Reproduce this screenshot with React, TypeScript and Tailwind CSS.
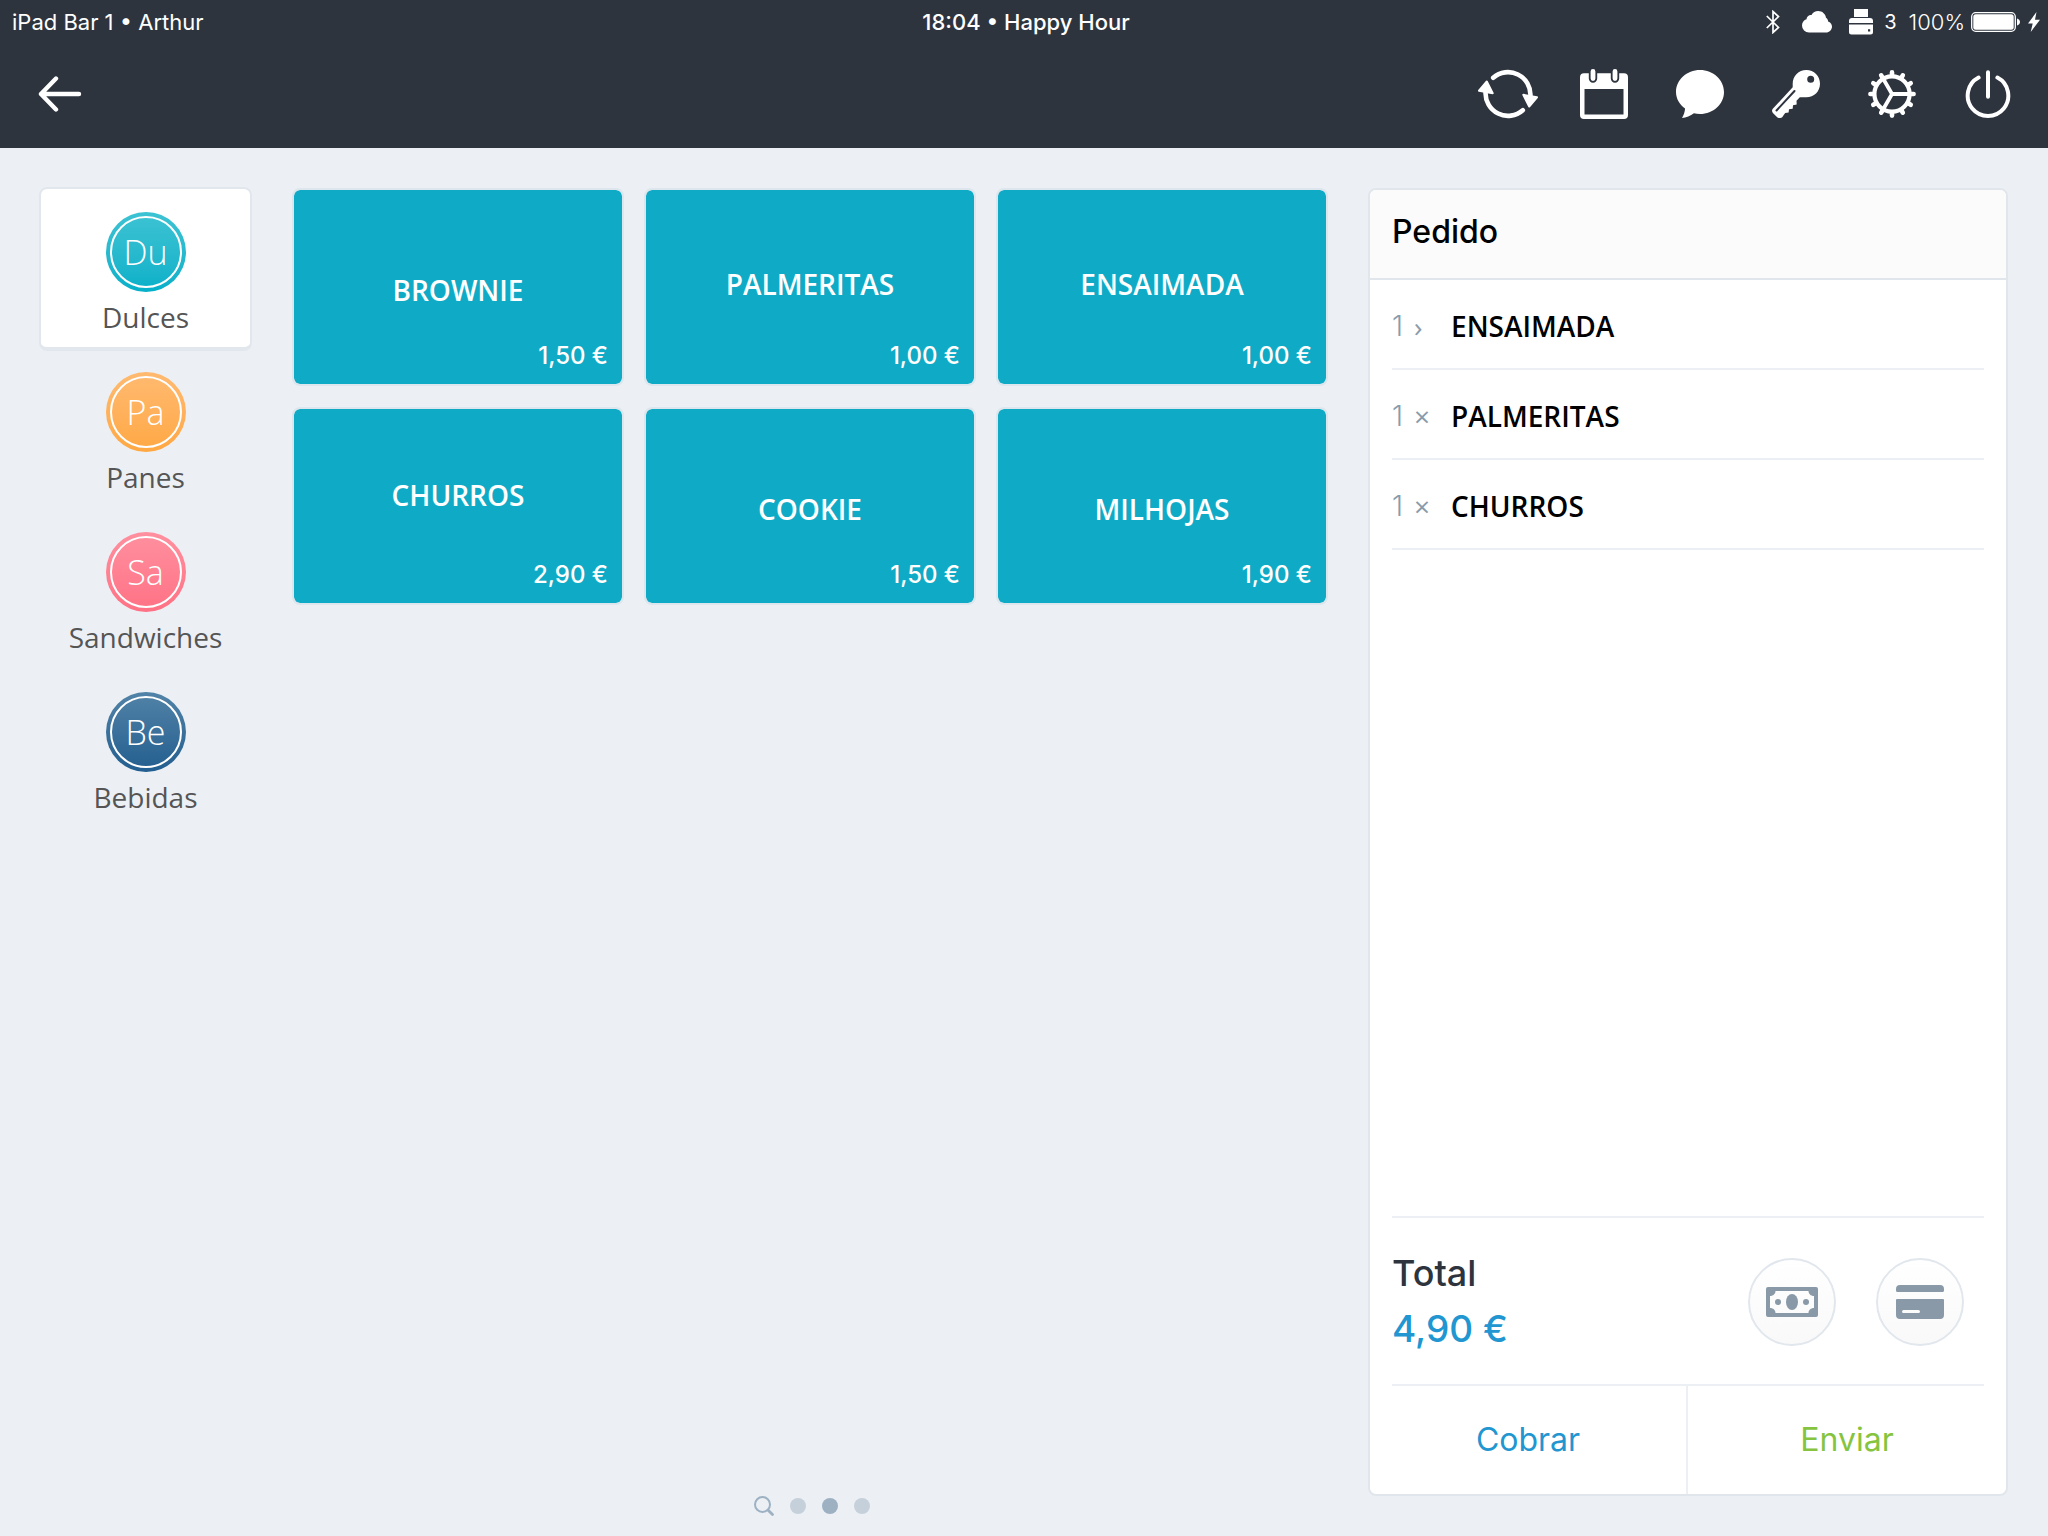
import React, { useState } from 'react';

const categories = [
  { initials: 'Du', name: 'Dulces', gradient: 'from-[#3cc3d3] to-[#04b0c9]' },
  { initials: 'Pa', name: 'Panes', gradient: 'from-[#ffba70] to-[#ffa843]' },
  { initials: 'Sa', name: 'Sandwiches', gradient: 'from-[#ff909f] to-[#ff7185]' },
  { initials: 'Be', name: 'Bebidas', gradient: 'from-[#5283a7] to-[#215e8f]' },
];

const products = [
  { name: 'BROWNIE', price: '1,50 €', label: 'low' },
  { name: 'PALMERITAS', price: '1,00 €', label: 'middle' },
  { name: 'ENSAIMADA', price: '1,00 €', label: 'middle' },
  { name: 'CHURROS', price: '2,90 €', label: 'high' },
  { name: 'COOKIE', price: '1,50 €', label: 'low' },
  { name: 'MILHOJAS', price: '1,90 €', label: 'low' },
];

const labelPadding = {
  high: 'pt-[66px]',
  middle: 'pt-[74px]',
  low: 'pt-[80px]',
};

const orderLines = [
  { qty: 1, mark: '›', name: 'ENSAIMADA' },
  { qty: 1, mark: '×', name: 'PALMERITAS' },
  { qty: 1, mark: '×', name: 'CHURROS' },
];

const BackIcon = () => (
  <svg width="44" height="36" viewBox="0 0 44 36" fill="none" stroke="white" strokeWidth="4.4" strokeLinecap="round" strokeLinejoin="round">
    <path d="M41 18H3M18 2.5 3 18l15 15.5" />
  </svg>
);

const SyncIcon = () => (
  <svg width="60" height="50" viewBox="0 0 60 50">
    <path d="M15.2 8.8A22.4 22.4 0 0 1 52.4 27" fill="none" stroke="white" strokeWidth="4.6" strokeLinecap="round" />
    <path d="M45.3 25.8 59 28.3 51.2 37.5Z" fill="white" stroke="white" strokeWidth="2" strokeLinejoin="round" />
    <path d="M44.8 41.2A22.4 22.4 0 0 1 7.6 23" fill="none" stroke="white" strokeWidth="4.6" strokeLinecap="round" />
    <path d="M14.7 24.2 1 21.7 8.8 12.5Z" fill="white" stroke="white" strokeWidth="2" strokeLinejoin="round" />
  </svg>
);

const CalendarIcon = () => (
  <svg width="48" height="50" viewBox="0 0 48 50">
    <path fill="white" fillRule="evenodd" d="M4 4.3h40a4 4 0 0 1 4 4V46a4 4 0 0 1-4 4H4a4 4 0 0 1-4-4V8.3a4 4 0 0 1 4-4ZM4.5 20v25.5h39V20Z" />
    <path d="M13 2.5v7M35 2.5v7" stroke="#2d343e" strokeWidth="8.4" strokeLinecap="round" />
    <path d="M13 2.4v7.2M35 2.4v7.2" stroke="white" strokeWidth="4.8" strokeLinecap="round" />
  </svg>
);

const ChatIcon = () => (
  <svg width="48" height="48" viewBox="0 0 48 48" fill="white">
    <path d="M24 0c13.3 0 24 9.800 24 22s-10.700 22-24 22c-2.100 0-4.200-.2-6.100-.7C14.500 46 10.300 47.700 6 48c1.700-2.700 2.800-6 3.100-9.400C3.500 34.600 0 28.700 0 22 0 9.800 10.700 0 24 0Z" />
  </svg>
);

const KeyIcon = () => (
  <svg width="48" height="48" viewBox="0 0 48 48">
    <path
      fill="white"
      fillRule="evenodd"
      d="M34.3 0C42 0 48 6 48 13.700S42 27.300 34.300 27.300h-6.500l-3.300 3.500.2 3.700-3.700.7-.3 3.500-3.700.6-.4 3.300-3.400.4-1.300 1.800-1.700 2.400c-1 1-3.900 1.200-5 .1L.9 42.900C-.2 41.700-.3 40 .8 38.800L20.700 17.300V13.700C20.700 6 26.700 0 34.300 0Zm4.400 5.700a3.500 3.500 0 1 0 0 7 3.500 3.500 0 0 0 0-7Z"
    />
    <path d="M4.5 40.5 22.5 21" stroke="#2d343e" strokeWidth="2" strokeLinecap="round" />
  </svg>
);

const GearIcon = () => (
  <svg width="48" height="48" viewBox="0 0 48 48" fill="none" stroke="white">
    <circle cx="24" cy="24" r="17.6" strokeWidth="4.2" />
    <g strokeWidth="4.6" strokeLinecap="round">
      {[0, 30, 60, 90, 120, 150, 180, 210, 240, 270, 300, 330].map((angle) => (
        <path key={angle} d="M24 4.8V2.4" transform={`rotate(${angle} 24 24)`} />
      ))}
    </g>
    <path d="M24 24h17M24 24 15.5 9.3M24 24l-8.5 14.7" strokeWidth="3.8" />
  </svg>
);

const PowerIcon = () => (
  <svg width="46" height="48" viewBox="0 0 46 48" fill="none" stroke="white" strokeWidth="4" strokeLinecap="round">
    <path d="M23 2.2v24.6M13.6 7.6a20.3 20.3 0 1 0 18.8 0" />
  </svg>
);

const StatusIcons = () => (
  <div className="flex flex-1 items-center justify-end pr-2">
    <svg className="mr-[22px]" width="14" height="24" viewBox="0 0 14 24" fill="none" stroke="white" strokeWidth="1.7">
      <path d="M.8 6 12.5 17.5 7 22.5v-21L12.5 6.5.8 18" />
    </svg>
    <svg className="mr-[17px]" width="30" height="22" viewBox="0 0 30 22" fill="white">
      <path d="M7 21.5a7 7 0 0 1-7-7C0 11.3 2 9 4.5 8.2 4.7 5.5 7 3.7 9.5 4 10.8 1.6 13.3 0 16.2 0c4 0 7.3 2.9 7.8 6.7 1.5.8 2.1 2.3 2.1 3.7 2.4.8 3.9 2.7 3.9 5.1 0 3.4-2.7 6-6 6Z" />
    </svg>
    <svg className="mr-[11px]" width="24" height="26" viewBox="0 0 24 26" fill="white">
      <path d="M5 0h14v8H5Z" />
      <path d="M3 9h18a3 3 0 0 1 3 3v2H0v-2a3 3 0 0 1 3-3Z" />
      <path fillRule="evenodd" d="M0 15.5h24V23a2.500 2.500 0 0 1-2.500 2.500h-19A2.500 2.500 0 0 1 0 23Zm19 4.700v2.200h2.200v-2.200Z" />
    </svg>
    <span className="mr-3 text-xl">3</span>
    <span className="mr-[6px] text-[22px] font-light">100%</span>
    <svg className="mr-[7px]" width="50" height="20" viewBox="0 0 50 20" fill="white">
      <rect x=".7" y=".7" width="43.6" height="18.6" rx="4" fill="none" stroke="white" strokeWidth="1.3" />
      <rect x="2.3" y="2.3" width="40.4" height="15.4" rx="2.5" />
      <path d="M46 6.5c1.6.4 3 1.8 3 3.5s-1.4 3.1-3 3.5Z" />
    </svg>
    <svg width="12" height="20" viewBox="0 0 12 20" fill="white">
      <path d="M8.5 0 0 11.500h4.700L2.700 20 12 7.800H7Z" />
    </svg>
  </div>
);

const CashIcon = () => (
  <svg width="52" height="30" viewBox="0 0 52 30" fill="#8999a8">
    <path fillRule="evenodd" d="M2 0h48a2 2 0 0 1 2 2v26a2 2 0 0 1-2 2H2a2 2 0 0 1-2-2V2a2 2 0 0 1 2-2Zm7.500 4c0 2.800-2.200 5-5.500 5v12c3.300 0 5.500 2.200 5.500 5h33c0-2.800 2.200-5 5.500-5V9c-3.300 0-5.500-2.200-5.500-5Z" />
    <ellipse cx="26" cy="15" rx="6" ry="8" />
    <circle cx="12" cy="15" r="3" />
    <circle cx="40" cy="15" r="3" />
  </svg>
);

const CardIcon = () => (
  <svg width="48" height="34" viewBox="0 0 48 34" fill="#8999a8">
    <path d="M4 0h40a4 4 0 0 1 4 4v1.500A1.500 1.500 0 0 1 46.500 7h-45A1.500 1.500 0 0 1 0 5.500V4a4 4 0 0 1 4-4Z" />
    <path fillRule="evenodd" d="M1 14h46a1 1 0 0 1 1 1v15a4 4 0 0 1-4 4H4a4 4 0 0 1-4-4V15a1 1 0 0 1 1-1Zm6.500 11a1.500 1.500 0 0 0 0 3h15a1.500 1.500 0 0 0 0-3Z" />
  </svg>
);

const toolbar = [
  { label: 'Sincronizar', Icon: SyncIcon },
  { label: 'Calendario', Icon: CalendarIcon },
  { label: 'Mensajes', Icon: ChatIcon },
  { label: 'Llave', Icon: KeyIcon },
  { label: 'Ajustes', Icon: GearIcon },
  { label: 'Apagar', Icon: PowerIcon },
];

const Header = () => (
  <header className="bg-[#2d343e] text-white">
    <div className="flex h-11 items-center text-[22px] leading-7">
      <div className="flex-1 pl-3">iPad Bar 1 • Arthur</div>
      <div className="font-medium">18:04 • Happy Hour</div>
      <StatusIcons />
    </div>
    <div className="flex h-[104px] items-start justify-between pr-[30px] pl-[38px]">
      <button aria-label="Volver" className="mt-8">
        <BackIcon />
      </button>
      <nav className="mt-[25px] flex gap-9">
        {toolbar.map(({ label, Icon }) => (
          <button key={label} aria-label={label} className="flex h-[50px] w-[60px] items-center justify-center">
            <Icon />
          </button>
        ))}
      </nav>
    </div>
  </header>
);

const Sidebar = ({ active, onSelect }) => (
  <aside className="-mt-px flex w-[213px] shrink-0 flex-col">
    {categories.map(({ initials, name, gradient }) => (
      <button
        key={name}
        onClick={() => onSelect(name)}
        className={`flex h-[164px] flex-col items-center rounded-lg border-2 border-b-4 pt-[23px] not-last:-mb-1 ${
          active === name ? 'border-[#e2e7ee] bg-white' : 'border-transparent'
        }`}
      >
        <span className={`flex h-20 w-20 shrink-0 rounded-full bg-linear-to-b p-1 ${gradient}`}>
          <span className="flex flex-1 items-center justify-center rounded-full border-2 border-white text-[34px] leading-10 font-light text-white font-['Open_Sans',sans-serif]">
            {initials}
          </span>
        </span>
        <span className="mt-[7px] text-[28px] leading-9 text-[#555] font-['Open_Sans',sans-serif]">{name}</span>
      </button>
    ))}
  </aside>
);

const ProductTile = ({ name, price, label }) => (
  <button
    className={`flex h-[198px] flex-col rounded-lg border-2 border-[#dde6ed] bg-[#0fabc6] bg-clip-padding pr-[14px] pb-3 pl-[14px] text-white ${labelPadding[label]}`}
  >
    <span className="self-center text-[28px] leading-10 font-semibold font-['Open_Sans',sans-serif]">{name}</span>
    <span className="mt-auto self-end text-2xl font-medium">{price}</span>
  </button>
);

const Pager = () => (
  <div className="mt-auto flex items-center justify-center gap-4 pl-1">
    <button aria-label="Buscar">
      <svg width="20" height="20" viewBox="0 0 20 20" fill="none" stroke="#9db1c3" strokeLinecap="round">
        <circle cx="8.5" cy="8.5" r="7.5" strokeWidth="2" />
        <path d="m14.2 14.2 4.3 4.3" strokeWidth="2.8" />
      </svg>
    </button>
    <button aria-label="Página 1" className="h-4 w-4 rounded-full bg-[#c5d0db]" />
    <button aria-label="Página 2" className="h-4 w-4 rounded-full bg-[#9db1c3]" />
    <button aria-label="Página 3" className="h-4 w-4 rounded-full bg-[#c5d0db]" />
  </div>
);

const OrderPanel = () => (
  <section className="mb-10 flex w-[640px] shrink-0 flex-col overflow-hidden rounded-lg border-2 border-[#e1e6ec] bg-white">
    <h2 className="flex h-[90px] items-center border-b-2 border-[#e1e6ec] bg-[#fbfbfb] px-[22px] pb-1 text-[32px] leading-10 font-medium text-black">
      Pedido
    </h2>
    <ul className="px-[22px]">
      {orderLines.map(({ qty, mark, name }) => (
        <li key={name} className="flex h-[90px] items-center border-b-2 border-[#ecf0f4] pt-1">
          <span className="w-[22px] text-[28px] font-light text-[#8a9bab]">{qty}</span>
          <span className="w-[37px] text-[28px] leading-10 text-[#8a9bab] font-['Open_Sans',sans-serif]">{mark}</span>
          <span className="text-[28px] leading-10 font-semibold text-black font-['Open_Sans',sans-serif]">{name}</span>
        </li>
      ))}
    </ul>
    <div className="mx-[22px] mt-auto flex h-[170px] items-center justify-between border-y-2 border-[#ecf0f4] pr-5">
      <div className="font-medium">
        <div className="text-[36px] leading-[56px] text-[#2d343e]">Total</div>
        <div className="text-[37px] leading-[56px] text-[#2196d0]">4,90 €</div>
      </div>
      <div className="flex gap-10 pt-px">
        <button aria-label="Efectivo" className="flex h-[88px] w-[88px] items-center justify-center rounded-full border-2 border-[#e2e7ed] bg-linear-to-b from-white to-[#f9f9f9]">
          <CashIcon />
        </button>
        <button aria-label="Tarjeta" className="flex h-[88px] w-[88px] items-center justify-center rounded-full border-2 border-[#e2e7ed] bg-linear-to-b from-white to-[#f9f9f9]">
          <CardIcon />
        </button>
      </div>
    </div>
    <div className="grid h-[108px] grid-cols-2 text-[32px]">
      <button className="border-r-2 border-[#ecf0f4] text-[#2196d0]">Cobrar</button>
      <button className="text-[#86c440]">Enviar</button>
    </div>
  </section>
);

const App = () => {
  const [active, setActive] = useState('Dulces');

  return (
    <div className="flex min-h-screen flex-col bg-[#ecf0f5] font-['Inter',sans-serif]">
      <Header />
      <main className="flex flex-1 gap-10 pt-10 pr-10 pl-[39px]">
        <Sidebar active={active} onSelect={setActive} />
        <div className="flex flex-1 flex-col pb-5">
          <div className="grid grid-cols-3 gap-x-5 gap-y-[21px]">
            {products.map((product) => (
              <ProductTile key={product.name} {...product} />
            ))}
          </div>
          <Pager />
        </div>
        <OrderPanel />
      </main>
    </div>
  );
};

export default App;
